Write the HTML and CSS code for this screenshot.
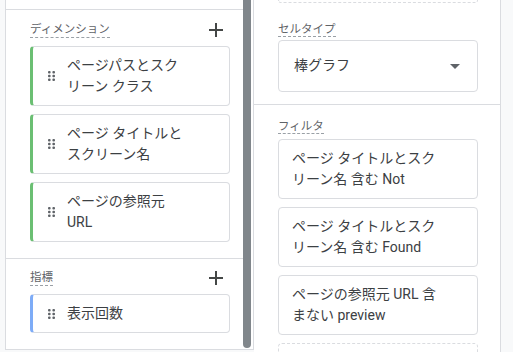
FILE: index.html
```html
<!DOCTYPE html>
<html lang="ja">
<head>
    <meta charset="UTF-8">
    <meta name="viewport" content="width=device-width, initial-scale=1.0">
    <title>変数と設定</title>
    <link rel="stylesheet" href="styles.css">
</head>
<body>
    <div class="page">
        <div class="pane pane-left">
            <div class="pane-body">
                <div class="cut"></div>

                <section class="group">
                    <div class="group-head">
                        <span class="label">ディメンション</span>
                        <button class="add" title="追加">
                            <svg width="14" height="14" viewBox="0 0 14 14"><path d="M7 0v14M0 7h14" stroke="#444746" stroke-width="2"/></svg>
                        </button>
                    </div>
                    <div class="chips">
                        <div class="chip chip-dim">
                            <svg class="handle" width="7" height="10" viewBox="0 0 7 10"><g fill="#5f6368"><rect x="0" y="0" width="2.6" height="2.6" rx="1"/><rect x="4.4" y="0" width="2.6" height="2.6" rx="1"/><rect x="0" y="3.7" width="2.6" height="2.6" rx="1"/><rect x="4.4" y="3.7" width="2.6" height="2.6" rx="1"/><rect x="0" y="7.4" width="2.6" height="2.6" rx="1"/><rect x="4.4" y="7.4" width="2.6" height="2.6" rx="1"/></g></svg>
                            <span class="chip-text">ページパスとスクリーン クラス</span>
                        </div>
                        <div class="chip chip-dim">
                            <svg class="handle" width="7" height="10" viewBox="0 0 7 10"><g fill="#5f6368"><rect x="0" y="0" width="2.6" height="2.6" rx="1"/><rect x="4.4" y="0" width="2.6" height="2.6" rx="1"/><rect x="0" y="3.7" width="2.6" height="2.6" rx="1"/><rect x="4.4" y="3.7" width="2.6" height="2.6" rx="1"/><rect x="0" y="7.4" width="2.6" height="2.6" rx="1"/><rect x="4.4" y="7.4" width="2.6" height="2.6" rx="1"/></g></svg>
                            <span class="chip-text">ページ タイトルとスクリーン名</span>
                        </div>
                        <div class="chip chip-dim">
                            <svg class="handle" width="7" height="10" viewBox="0 0 7 10"><g fill="#5f6368"><rect x="0" y="0" width="2.6" height="2.6" rx="1"/><rect x="4.4" y="0" width="2.6" height="2.6" rx="1"/><rect x="0" y="3.7" width="2.6" height="2.6" rx="1"/><rect x="4.4" y="3.7" width="2.6" height="2.6" rx="1"/><rect x="0" y="7.4" width="2.6" height="2.6" rx="1"/><rect x="4.4" y="7.4" width="2.6" height="2.6" rx="1"/></g></svg>
                            <span class="chip-text">ページの参照元 URL</span>
                        </div>
                    </div>
                </section>

                <section class="group group-metric">
                    <div class="group-head">
                        <span class="label">指標</span>
                        <button class="add" title="追加">
                            <svg width="14" height="14" viewBox="0 0 14 14"><path d="M7 0v14M0 7h14" stroke="#444746" stroke-width="2"/></svg>
                        </button>
                    </div>
                    <div class="chips">
                        <div class="chip chip-metric">
                            <svg class="handle" width="7" height="10" viewBox="0 0 7 10"><g fill="#5f6368"><rect x="0" y="0" width="2.6" height="2.6" rx="1"/><rect x="4.4" y="0" width="2.6" height="2.6" rx="1"/><rect x="0" y="3.7" width="2.6" height="2.6" rx="1"/><rect x="4.4" y="3.7" width="2.6" height="2.6" rx="1"/><rect x="0" y="7.4" width="2.6" height="2.6" rx="1"/><rect x="4.4" y="7.4" width="2.6" height="2.6" rx="1"/></g></svg>
                            <span class="chip-text">表示回数</span>
                        </div>
                    </div>
                </section>
            </div>
            <div class="scrollbar"></div>
        </div>

        <div class="pane pane-right">
            <div class="ghost"></div>

            <section class="field field-type">
                <div class="field-head"><span class="label">セルタイプ</span></div>
                <div class="select">
                    <span class="select-text">棒グラフ</span>
                    <span class="caret"></span>
                </div>
            </section>

            <section class="field field-filter">
                <div class="field-head"><span class="label">フィルタ</span></div>
                <div class="filters">
                    <div class="filter">ページ タイトルとスクリーン名 含む Not</div>
                    <div class="filter">ページ タイトルとスクリーン名 含む Found</div>
                    <div class="filter">ページの参照元 URL 含まない preview</div>
                    <div class="filter-add"></div>
                </div>
            </section>
        </div>
    </div>
</body>
</html>
```

FILE: styles.css
```css
body {
    margin: 0;
    height: 352px;
    overflow: hidden;
    background-color: #f8f9fa;
    font-family: Roboto, "Noto Sans CJK JP", sans-serif;
    color: #3c4043;
}
.page {
    display: flex;
    align-items: flex-start;
    padding-left: 5px;
    height: 352px;
    overflow: hidden;
}
.pane {
    background: #fff;
}
.pane-left {
    width: 247px;
    display: flex;
    border-left: 1px solid #dadce0;
    border-right: 1px solid #dadce0;
    border-bottom: 1px solid #dadce0;
}
.pane-body {
    flex: 1;
}
.scrollbar {
    width: 8px;
    margin: 0 2px 1px 0;
    background: #80868b;
    border-radius: 0 0 4px 4px;
}
.cut {
    height: 9px;
    border-bottom: 1px solid #dadce0;
}
.group {
    padding: 12px 13px 16px 24px;
}
.group-metric {
    border-top: 1px solid #dadce0;
    padding-top: 11px;
}
.group-head {
    display: flex;
    justify-content: space-between;
    align-items: center;
    height: 16px;
    margin-bottom: 8px;
}
.label {
    font-size: 11.5px;
    line-height: 15px;
    color: #5f6368;
    border-bottom: 1px dashed #9aa0a6;
}
.add {
    display: flex;
    padding: 0;
    margin-right: 7px;
    border: none;
    background: transparent;
    cursor: pointer;
}
.chips {
    display: flex;
    flex-direction: column;
    gap: 8px;
}
.chip {
    display: flex;
    align-items: center;
    border: 1px solid #dadce0;
    border-left: 3px solid #6bbf73;
    border-radius: 4px;
    padding: 8px 38px 8px 15px;
    font-size: 14px;
    line-height: 21px;
}
.chip-metric {
    border-left-color: #7eacf7;
}
.handle {
    flex: none;
    margin-right: 12px;
}
.pane-right {
    width: 246px;
    height: 352px;
    overflow: hidden;
    border-right: 1px solid #dadce0;
}
.ghost {
    height: 2px;
    margin: 0 22px 0 24px;
    border: 1px dashed #dadce0;
    border-top: none;
    border-radius: 0 0 4px 4px;
}
.field {
    padding: 15px 22px 12px 24px;
}
.field-filter {
    border-top: 1px solid #dadce0;
    padding-top: 10px;
}
.field-head {
    height: 16px;
    margin-bottom: 6px;
}
.field-filter .field-head {
    margin-bottom: 8px;
}
.select {
    height: 50px;
    display: flex;
    align-items: center;
    justify-content: space-between;
    padding: 0 17px 0 15px;
    border: 1px solid #dadce0;
    border-radius: 4px;
    font-size: 14px;
}
.select-text {
    margin-top: -4px;
}
.caret {
    width: 0;
    height: 0;
    border-left: 5px solid transparent;
    border-right: 5px solid transparent;
    border-top: 5px solid #5f6368;
}
.filters {
    display: flex;
    flex-direction: column;
    gap: 8px;
}
.filter {
    border: 1px solid #dadce0;
    border-radius: 4px;
    padding: 8px 34px 8px 13px;
    font-size: 14px;
    line-height: 21px;
}
.filter-add {
    height: 40px;
    border: 1px dashed #dadce0;
    border-radius: 4px;
}
```
